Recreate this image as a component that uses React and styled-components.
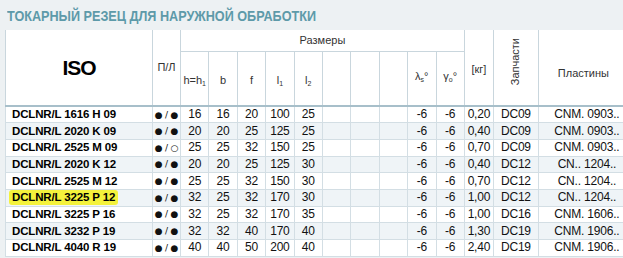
import React from 'react'
import styled, { createGlobalStyle } from 'styled-components'

const GlobalStyle = createGlobalStyle`
  html, body {
    margin: 0;
    padding: 0;
    background: #edf1f3;
    overflow: hidden;
  }
`

const rows = [
  ['DCLNR/L 1616 H 09', true, 16, 16, 20, 100, 25, '0,20', 'DC09', 'CNM. 0903..'],
  ['DCLNR/L 2020 K 09', true, 20, 20, 25, 125, 25, '0,40', 'DC09', 'CNM. 0903..'],
  ['DCLNR/L 2525 M 09', false, 25, 25, 32, 150, 25, '0,70', 'DC09', 'CNM. 0903..'],
  ['DCLNR/L 2020 K 12', true, 20, 20, 25, 125, 30, '0,40', 'DC12', 'CN.. 1204..'],
  ['DCLNR/L 2525 M 12', true, 25, 25, 32, 150, 30, '0,70', 'DC12', 'CN.. 1204..'],
  ['DCLNR/L 3225 P 12', true, 32, 25, 32, 170, 30, '1,00', 'DC12', 'CN.. 1204..', true],
  ['DCLNR/L 3225 P 16', true, 32, 25, 32, 170, 35, '1,00', 'DC16', 'CNM. 1606..'],
  ['DCLNR/L 3232 P 19', true, 32, 32, 40, 170, 40, '1,30', 'DC19', 'CNM. 1906..'],
  ['DCLNR/L 4040 R 19', true, 40, 40, 50, 200, 40, '2,40', 'DC19', 'CNM. 1906..'],
]

function App() {
  return (
    <Page>
      <GlobalStyle />
      <TitleBar>
        <Title>ТОКАРНЫЙ РЕЗЕЦ ДЛЯ НАРУЖНОЙ ОБРАБОТКИ</Title>
      </TitleBar>
      <Table>
        <colgroup>
          <col style={{ width: 147 }} />
          <col style={{ width: 28 }} />
          {Array.from({ length: 10 }).map((_, i) => (
            <col key={i} style={{ width: 28.4 }} />
          ))}
          <col style={{ width: 29 }} />
          <col style={{ width: 45 }} />
          <col style={{ width: 90 }} />
        </colgroup>
        <thead>
          <tr>
            <HeadCell rowSpan={2}><Iso>ISO</Iso></HeadCell>
            <HeadCell rowSpan={2}>П/Л</HeadCell>
            <GroupCell colSpan={10}>Размеры</GroupCell>
            <HeadCell rowSpan={2} $top={4}>[кг]</HeadCell>
            <HeadCell rowSpan={2} $bottom={12}><Vertical>Запчасти</Vertical></HeadCell>
            <HeadCell rowSpan={2} $top={12}>Пластины</HeadCell>
          </tr>
          <tr>
            <SubCell>h=h<sub>1</sub></SubCell>
            <SubCell>b</SubCell>
            <SubCell>f</SubCell>
            <SubCell>l<sub>1</sub></SubCell>
            <SubCell>l<sub>2</sub></SubCell>
            <SubCell />
            <SubCell />
            <SubCell />
            <SubCell $up>λ<sub>s</sub>°</SubCell>
            <SubCell $up>γ<sub>o</sub>°</SubCell>
          </tr>
        </thead>
        <tbody>
          {rows.map((r, i) => (
            <tr key={r[0]}>
              <CodeCell $shade={i % 2 === 1}>{r[10] ? <Marker>{r[0]}</Marker> : r[0]}</CodeCell>
              <Cell $shade={i % 2 === 1}>
                <Dots>● / {r[1] ? '●' : <Open>○</Open>}</Dots>
              </Cell>
              <Cell $shade={i % 2 === 1}>{r[2]}</Cell>
              <Cell $shade={i % 2 === 1}>{r[3]}</Cell>
              <Cell $shade={i % 2 === 1}>{r[4]}</Cell>
              <Cell $shade={i % 2 === 1}>{r[5]}</Cell>
              <Cell $shade={i % 2 === 1}>{r[6]}</Cell>
              <Cell $shade={i % 2 === 1} />
              <Cell $shade={i % 2 === 1} />
              <Cell $shade={i % 2 === 1} />
              <Cell $shade={i % 2 === 1}>-6</Cell>
              <Cell $shade={i % 2 === 1}>-6</Cell>
              <Cell $shade={i % 2 === 1}>{r[7]}</Cell>
              <Cell $shade={i % 2 === 1}>{r[8]}</Cell>
              <Cell $shade={i % 2 === 1} $pad>{r[9]}</Cell>
            </tr>
          ))}
        </tbody>
      </Table>
    </Page>
  )
}

export default App

const Page = styled.div`
  width: 623px;
  height: 258px;
  padding: 0 0 0 5px;
  box-sizing: border-box;
  overflow: hidden;
  font-family: "Liberation Sans", Arial, sans-serif;
`

const TitleBar = styled.div`
  height: 30px;
  padding: 7px 0 0 2px;
  box-sizing: border-box;
`

const Title = styled.h1`
  display: inline-block;
  margin: 0;
  font-size: 15.5px;
  line-height: 17px;
  font-weight: bold;
  color: #5d9aa9;
  white-space: nowrap;
  transform: scaleX(0.815);
  transform-origin: left center;
`

const Table = styled.table`
  table-layout: fixed;
  border-collapse: collapse;
  width: 623px;
  background: #ffffff;
  color: #111;
`

const HeadCell = styled.th`
  border: 1px solid #c9d6dd;
  border-top: none;
  border-bottom: 2px solid #a7bfca;
  font-weight: normal;
  font-size: 11px;
  line-height: 13px;
  color: #333;
  text-align: center;
  vertical-align: middle;
  padding: ${p => `${p.$top || 0}px 0 ${p.$bottom || 0}px`};
`

const Iso = styled.span`
  font-weight: bold;
  font-size: 21px;
  line-height: 22px;
  color: #000;
  letter-spacing: -1px;
`

const GroupCell = styled.th`
  height: 21px;
  box-sizing: border-box;
  border: 1px solid #c9d6dd;
  border-top: none;
  font-weight: normal;
  font-size: 11px;
  line-height: 13px;
  color: #333;
  padding: 0;
  vertical-align: middle;
`

const SubCell = styled.th`
  height: 55px;
  box-sizing: border-box;
  border-left: 1px solid #c9d6dd;
  border-right: 1px solid #c9d6dd;
  border-bottom: 2px solid #a7bfca;
  font-weight: normal;
  font-size: 11px;
  line-height: 13px;
  color: #333;
  padding: ${p => (p.$up ? '0 0 4px' : '4px 0 0')};
  vertical-align: middle;

  sub {
    font-size: 7px;
    line-height: 0;
    vertical-align: -2px;
  }
`

const Vertical = styled.span`
  display: inline-block;
  writing-mode: vertical-rl;
  transform: rotate(180deg);
  font-size: 11px;
  line-height: 13px;
  vertical-align: middle;
`

const Cell = styled.td`
  height: 16.7px;
  box-sizing: border-box;
  border: 1px solid #d3dee4;
  background: ${p => (p.$shade ? '#eff4f7' : '#ffffff')};
  font-size: 12px;
  letter-spacing: -0.2px;
  text-align: center;
  padding: ${p => (p.$pad ? '0 0 0 7px' : '0')};
  line-height: 13px;
  white-space: nowrap;
  color: #111;
`

const CodeCell = styled.td`
  height: 16.7px;
  box-sizing: border-box;
  border: 1px solid #d3dee4;
  background: ${p => (p.$shade ? '#eff4f7' : '#ffffff')};
  font-weight: bold;
  font-size: 11.5px;
  letter-spacing: -0.15px;
  padding: 0 0 0 6px;
  line-height: 13px;
  white-space: nowrap;
  color: #000;
`

const Marker = styled.span`
  background: #f4f23c;
  margin-left: -3px;
  padding: 1px 3px 2px;
  border-radius: 3px;
`

const Dots = styled.span`
  font-size: 9px;
  font-family: "DejaVu Sans", sans-serif;
`

const Open = styled.span`
  font-size: 9px;
`
